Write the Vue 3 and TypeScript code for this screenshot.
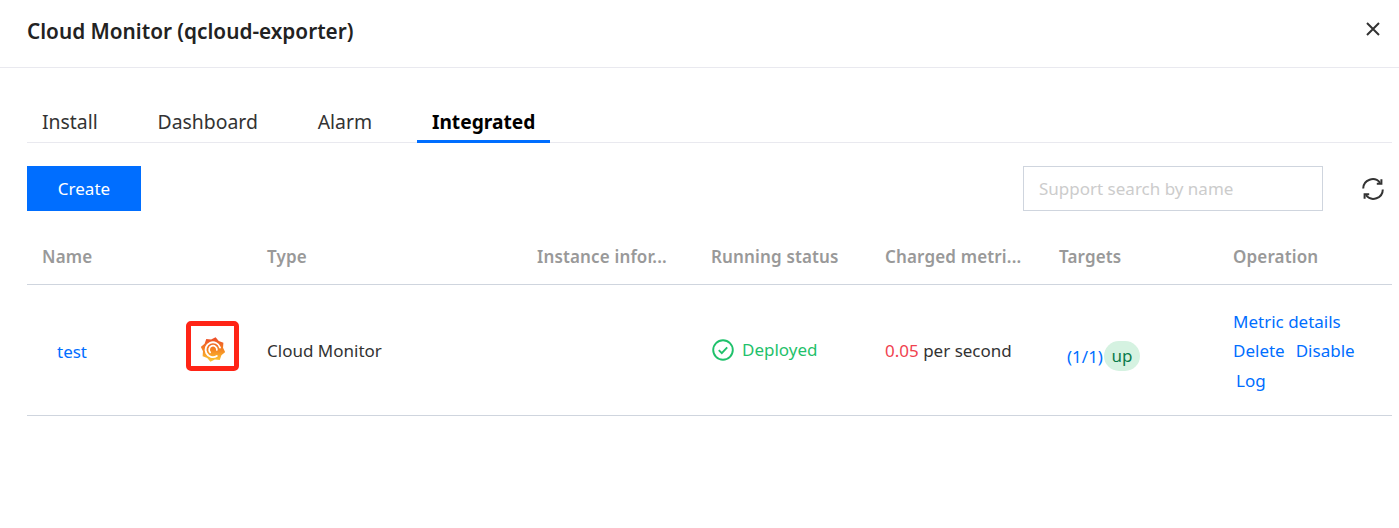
<script setup lang="ts">
const tabs: string[] = ['Install', 'Dashboard', 'Alarm', 'Integrated']
const heads: string[] = ['Name', 'Type', 'Instance infor...', 'Running status', 'Charged metri...', 'Targets', 'Operation']

// Eight-toothed gear of the Grafana mark, computed so the teeth stay even.
const gear: string = Array.from({ length: 16 }, (_, i) => {
  const r = i % 2 === 0 ? 12.4 : 10.2
  const a = ((i * 22.5 - 78) * Math.PI) / 180
  return `${(12 + r * Math.cos(a)).toFixed(2)} ${(12.5 + r * Math.sin(a)).toFixed(2)}`
}).join(' L')
</script>

<template>
  <div class="dialog">
    <header class="head">
      <h1>Cloud Monitor (qcloud-exporter)</h1>
      <svg class="close" width="16" height="16" viewBox="0 0 16 16"><path d="M2 2 14 14M14 2 2 14" stroke="#333" stroke-width="2" fill="none" /></svg>
    </header>
    <div class="body">
      <nav class="tabs">
        <span v-for="(t, i) in tabs" :key="t" class="tab" :class="{ active: i === 3 }">{{ t }}</span>
      </nav>
      <div class="tools">
        <button class="create">Create</button>
        <div class="right">
          <input class="search" placeholder="Support search by name" />
          <svg class="refresh" width="24" height="24" viewBox="0 0 24 24" fill="none" stroke="#333" stroke-width="2">
            <path d="M2.200 11.500A9.400 9.400 0 0 1 19 5.800" />
            <path d="M20.400 2.200v4.600h-4.600" />
            <path d="M21.800 12.500A9.400 9.400 0 0 1 5 18.200" />
            <path d="M3.600 21.800v-4.600h4.600" />
          </svg>
        </div>
      </div>
      <div class="table">
        <div class="row thead">
          <div v-for="h in heads" :key="h" class="cell"><span>{{ h }}</span></div>
        </div>
        <div class="row tbody">
          <div class="cell name">
            <a class="test">test</a>
            <div class="logo">
              <svg width="24" height="25" viewBox="0 0 24 25">
                <defs>
                  <linearGradient id="gf" x1="0" y1="0" x2="0" y2="1">
                    <stop offset="0" stop-color="#ec4a2a" />
                    <stop offset="0.55" stop-color="#f58a24" />
                    <stop offset="1" stop-color="#fccb36" />
                  </linearGradient>
                </defs>
                <path fill="url(#gf)" :d="`M${gear} Z`" />
                <path fill="none" stroke="#fff" stroke-width="1.900" stroke-linecap="round" d="M19 10.500A7.400 7.400 0 1 0 15.800 19" />
                <path fill="none" stroke="#fff" stroke-width="1.700" stroke-linecap="round" d="M9.200 15.300A3.900 3.900 0 1 1 15.900 13" />
              </svg>
            </div>
          </div>
          <div class="cell">Cloud Monitor</div>
          <div class="cell"></div>
          <div class="cell status">
            <svg width="22" height="22" viewBox="0 0 22 22" fill="none" stroke="#1fc16b" stroke-width="1.900">
              <circle cx="11" cy="11" r="9.800" />
              <path d="M6.800 11.200l3 3 5.400-5.800" />
            </svg>
            <span>Deployed</span>
          </div>
          <div class="cell charged"><span class="red">0.05</span>&nbsp;per second</div>
          <div class="cell targets"><a>(1/1)</a><span class="pill">up</span></div>
          <div class="cell ops">
            <a>Metric details</a>
            <div class="pair"><a>Delete</a><a>Disable</a></div>
            <a class="log">Log</a>
          </div>
        </div>
      </div>
    </div>
  </div>
</template>

<style>
body { background: #fff; }
</style>

<style scoped>
.dialog {
  width: 1399px;
  height: 528px;
  overflow: hidden;
  background: #fff;
  font-family: "Noto Sans", "Open Sans", sans-serif;
  font-size: 17px;
  color: #333;
}
.head {
  height: 67px;
  box-sizing: content-box;
  display: flex;
  align-items: center;
  justify-content: space-between;
  padding: 0 18px 0 27px;
  border-bottom: 1px solid #e9e9ef;
}
h1 {
  margin: 0 0 6px;
  font-size: 20.750px;
  font-weight: 600;
  color: #222;
}
.close { margin-bottom: 10px; }
.body { padding: 0 7px 0 27px; }
.tabs {
  display: flex;
  height: 74px;
  align-items: flex-end;
  border-bottom: 1px solid #e9e9ef;
}
.tab {
  padding: 0 15px;
  margin-right: 29.800px;
  height: 34px;
  font-size: 19.400px;
  line-height: 27px;
  color: #333;
}
.tab.active {
  margin-right: 0;
  font-size: 19.200px;
  font-weight: 700;
  color: #000;
  border-bottom: 3px solid #006eff;
  margin-bottom: -1px;
  height: 32px;
  line-height: 27.500px;
}
.tools {
  display: flex;
  justify-content: space-between;
  align-items: center;
  margin-top: 23px;
  height: 45px;
}
.create {
  width: 114px;
  height: 45px;
  border: 0;
  background: #006eff;
  color: #fff;
  font: inherit;
  font-size: 17px;
}
.right { display: flex; align-items: center; gap: 38px; padding-right: 7px; }
.search {
  width: 300px;
  height: 45px;
  box-sizing: border-box;
  border: 1px solid #cfd5de;
  padding: 0 15px;
  font: inherit;
  font-size: 17px;
  outline: 0;
}
.search::placeholder { color: #ccc; opacity: 1; }
.table { margin-top: 23px; }
.row {
  display: grid;
  grid-template-columns: 225px 270px repeat(5, 174px);
  border-bottom: 1px solid #cfd5de;
}
.thead { height: 50px; }
.tbody { height: 130px; }
.cell {
  padding: 0 15px;
  display: flex;
  align-items: center;
  min-width: 0;
  white-space: nowrap;
}
.thead .cell { font-weight: 600; color: #999; font-size: 17px; padding-bottom: 5px; letter-spacing: 0.15px; }
a { color: #006eff; }
.name { padding-right: 13px; justify-content: space-between; }
.test { margin-left: 15px; padding-top: 2px; }
.logo {
  width: 53px;
  height: 50px;
  box-sizing: border-box;
  border: 5px solid #ff2416;
  border-radius: 5px;
  display: flex;
  align-items: center;
  justify-content: center;
  padding-top: 7px;
  margin-bottom: 9px;
}
.status { gap: 8px; color: #1fc16b; padding-bottom: 1px; padding-left: 16px; }
.red { color: #f0424f; }
.targets { padding-left: 23px; padding-top: 12px; }
.pill {
  background: #d5f2e1;
  color: #0b7a4b;
  border-radius: 15px;
  padding: 0 7.500px;
  line-height: 30px;
  margin-left: 1px;
}
.ops {
  flex-direction: column;
  align-items: flex-start;
  justify-content: center;
  line-height: 29.500px;
  padding-top: 2px;
}
.pair { display: flex; gap: 11px; }
.log { margin-left: 3px; }
</style>
